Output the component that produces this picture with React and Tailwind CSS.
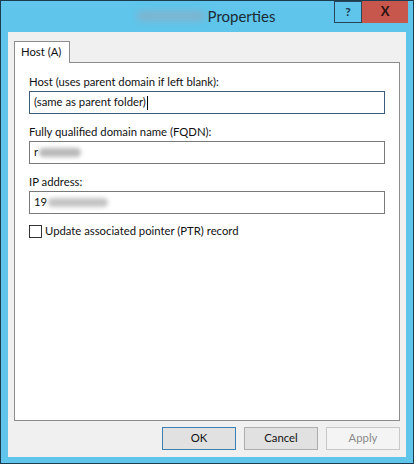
import React from 'react';

const font = { fontFamily: '"Segoe UI", Lato, "Noto Sans", sans-serif' };

function Field({ label, children, focused }) {
    return (
        <div className="flex flex-col">
            <div className="h-[16px] text-[11.3px] leading-[16px] text-[#111]">{label}</div>
            <div
                className={
                    'mt-px flex h-[23px] items-center border bg-white pl-[4px] text-[11.3px] text-[#111] ' +
                    (focused ? 'border-[#3e5c7b]' : 'border-[#7a7a7a]')
                }
            >
                {children}
            </div>
        </div>
    );
}

function Blur({ w, color = 'bg-[#b9b9b9]' }) {
    return <span className={'ml-[1px] inline-block h-[9px] rounded-full blur-[2px] ' + color} style={{ width: w }} />;
}

export default function App() {
    return (
        <div className="h-[467px] w-[416px] bg-white" style={font}>
            <div className="flex h-[464px] w-[414px] flex-col border border-[#1d3c50] bg-[#5fc5ea]">
                {/* Title bar */}
                <div className="relative flex h-[30px] shrink-0 items-start">
                    <div className="flex h-[30px] flex-1 items-center justify-center pr-[2px] text-[15px] text-[#1b2b36]">
                        <span className="mr-[3px] inline-block h-[10px] w-[68px] rounded-full bg-[#7fb4cf] blur-[3px]" />
                        <span>Properties</span>
                    </div>
                    <div className="absolute right-[5px] top-0 flex">
                        <div className="flex h-[22px] w-[28px] items-center justify-center border border-[#27465a] text-[12px] font-bold text-[#17324a]">
                            ?
                        </div>
                        <div className="flex h-[22px] w-[46px] items-center justify-center bg-[#c7564c] text-[13px] font-bold text-[#2a1312]">
                            X
                        </div>
                    </div>
                </div>

                {/* Client area */}
                <div className="mx-[7px] mb-[6px] mt-px flex flex-1 flex-col bg-[#f0f0f0] px-[6px] pt-[9px]">
                    <div className="relative z-10 -mb-px flex h-[22px] w-[56px] items-center border border-b-0 border-[#8c8c8c] bg-white pl-[6px] text-[11.3px] text-[#111]">
                        Host (A)
                    </div>
                    <div className="flex h-[359px] flex-col gap-[10px] border border-[#8c8c8c] bg-white px-[14px] pt-[11px]">
                        <Field label="Host (uses parent domain if left blank):" focused>
                            <span>(same as parent folder)</span>
                            <span className="ml-px inline-block h-[14px] w-px bg-black" />
                        </Field>
                        <Field label="Fully qualified domain name (FQDN):">
                            <span>r</span>
                            <Blur w={42} />
                        </Field>
                        <Field label="IP address:">
                            <span>19</span>
                            <Blur w={60} color="bg-[#c4c4c4]" />
                        </Field>
                        <label className="-mt-px flex items-center gap-[3px] text-[11.3px] text-[#111]">
                            <span className="inline-block h-[13px] w-[13px] border border-[#333] bg-white" />
                            <span>Update associated pointer (PTR) record</span>
                        </label>
                    </div>
                    <div className="mt-[6px] flex justify-end gap-[8px] text-[11.3px]">
                        <button className="h-[23px] w-[74px] border border-[#3c7fb1] bg-[#e1e1e1] text-[#111]">OK</button>
                        <button className="h-[23px] w-[74px] border border-[#adadad] bg-[#e1e1e1] text-[#111]">Cancel</button>
                        <button className="h-[23px] w-[74px] border border-[#c8c8c8] bg-[#f4f4f4] text-[#8a8a8a]">Apply</button>
                    </div>
                </div>
            </div>
        </div>
    );
}
